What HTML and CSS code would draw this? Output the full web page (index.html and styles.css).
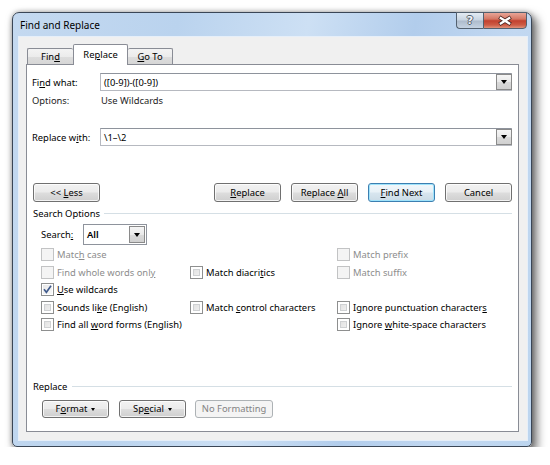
FILE: index.html
```html
<!DOCTYPE html>
<html>
<head>
<meta charset="utf-8">
<title>Find and Replace</title>
<link rel="stylesheet" href="styles.css">
</head>
<body>
<div class="window">
  <div class="titlebar">
    <span class="title">Find and Replace</span>
    <div class="caption-btns">
      <div class="cbtn help"><span>?</span></div>
      <div class="cbtn close">
        <svg width="44" height="17" viewBox="0 0 44 17">
          <path d="M16 5 L28 12.5 M28 5 L16 12.5" stroke="#4a2520" stroke-width="4.2" fill="none"/>
          <path d="M16.6 5.4 L27.4 12.1 M27.4 5.4 L16.6 12.1" stroke="#ffffff" stroke-width="2.4" fill="none"/>
        </svg>
      </div>
    </div>
  </div>
  <div class="client">
    <div class="tabs">
      <div class="tab t-find">Fin<u>d</u></div>
      <div class="tab sel t-rep">Re<u>p</u>lace</div>
      <div class="tab t-go"><u>G</u>o To</div>
    </div>
    <div class="panel">
      <div class="field-row first">
        <span class="flabel">Fi<u>n</u>d what:</span>
        <div class="combo"><span class="ctext">([0-9])-([0-9])</span><div class="drop"><i class="tri"></i></div></div>
      </div>
      <div class="opt-row">
        <span class="flabel">Options:</span>
        <span class="otext">Use Wildcards</span>
      </div>
      <div class="field-row second">
        <span class="flabel">Replace w<u>i</u>th:</span>
        <div class="combo"><span class="ctext">\1–\2</span><div class="drop"><i class="tri"></i></div></div>
      </div>
      <div class="btn-row main">
        <button class="btn"><span>&lt;&lt; <u>L</u>ess</span></button>
        <button class="btn push"><span><u>R</u>eplace</span></button>
        <button class="btn"><span>Replace <u>A</u>ll</span></button>
        <button class="btn default"><span><u>F</u>ind Next</span></button>
        <button class="btn"><span>Cancel</span></button>
      </div>
      <div class="group-head">
        <span>Search Options</span><div class="rule"></div>
      </div>
      <div class="search-row">
        <span class="slabel">Search<u>:</u></span>
        <div class="select"><span class="stext">All</span><div class="drop"><i class="tri"></i></div></div>
      </div>
      <div class="checks">
        <div class="chk disabled"><i class="box"></i><span>Matc<u>h</u> case</span></div>
        <div class="chk empty"></div>
        <div class="chk disabled"><i class="box"></i><span>Match prefix</span></div>

        <div class="chk disabled"><i class="box"></i><span>Find whole words onl<u>y</u></span></div>
        <div class="chk"><i class="box"></i><span>Match diacri<u>t</u>ics</span></div>
        <div class="chk disabled"><i class="box"></i><span>Match suffix</span></div>

        <div class="chk"><i class="box checked"><svg width="11" height="11" viewBox="0 0 11 11"><path d="M2 5.2 L4.4 8.3 L9 1.8" stroke="#3f5a8c" stroke-width="1.6" fill="none"/></svg></i><span><u>U</u>se wildcards</span></div>
        <div class="chk empty"></div>
        <div class="chk empty"></div>

        <div class="chk"><i class="box"></i><span>Sounds li<u>k</u>e (English)</span></div>
        <div class="chk"><i class="box"></i><span>Match <u>c</u>ontrol characters</span></div>
        <div class="chk"><i class="box"></i><span>Ignore punctuation character<u>s</u></span></div>

        <div class="chk"><i class="box"></i><span>Find all <u>w</u>ord forms (English)</span></div>
        <div class="chk empty"></div>
        <div class="chk"><i class="box"></i><span>Ignore <u>w</u>hite-space characters</span></div>
      </div>
      <div class="group-head rep">
        <span>Replace</span><div class="rule"></div>
      </div>
      <div class="btn-row bottom">
        <button class="btn"><span>F<u>o</u>rmat</span><i class="mini-tri"></i></button>
        <button class="btn"><span>Sp<u>e</u>cial</span><i class="mini-tri"></i></button>
        <button class="btn wide" disabled><span>No Formatting</span></button>
      </div>
    </div>
  </div>
</div>
</body>
</html>
```

FILE: styles.css
```css
* { box-sizing: border-box; }
html, body { margin: 0; }
body {
  background: #ffffff;
  padding: 12px 0 0 12px;
  font-family: "Noto Sans", "Open Sans", sans-serif;
  font-size: 9.4px;
  color: #000;
}
u { text-decoration: underline; text-underline-offset: 1px; }

.window {
  width: 520px;
  height: 435px;
  border: 1px solid #3a4656;
  border-radius: 7px 7px 5px 5px;
  background:
    linear-gradient(100deg, #c4d9f0 0%, #bad3ee 28%, #cde0f4 50%, #b2cdec 68%, #c2d8f1 85%, #bcd5ef 100%);
  box-shadow: 4px 5px 10px 1px rgba(0, 0, 0, 0.55), 0 0 5px rgba(0, 0, 0, 0.3);
  padding: 0 4px 6px 6px;
  display: flex;
  flex-direction: column;
}

.titlebar {
  height: 24px;
  display: flex;
  align-items: flex-start;
}
.title {
  padding-left: 1px;
  line-height: 24px;
  font-size: 10px;
  color: #000;
}
.caption-btns {
  margin-left: auto;
  margin-top: -1px;
  display: flex;
}
.cbtn {
  height: 17px;
  border: 1px solid #52606f;
  display: flex;
  align-items: center;
  justify-content: center;
}
.help {
  width: 27px;
  border-right: none;
  border-radius: 0 0 0 4px;
  background: linear-gradient(#e3ebf3 0%, #c9d5e2 45%, #aebccd 55%, #c5d3e2 100%);
}
.help span {
  font-family: "DejaVu Sans", sans-serif;
  font-weight: bold;
  font-size: 11px;
  color: #f2f4f7;
  text-shadow: 1px 0 0 #55606c, -1px 0 0 #55606c, 0 1px 0 #55606c, 0 -1px 0 #55606c;
  line-height: 1;
  margin-top: -1px;
}
.close {
  width: 44px;
  border-radius: 0 0 4px 0;
  background: linear-gradient(#e8a597 0%, #d47764 40%, #c2412f 52%, #cd5b45 80%, #e0917a 100%);
}
.close svg { display: block; }

.client {
  flex: 1;
  background: #f0f0f0;
  box-shadow: 0 0 0 1px #e6eff9;
  padding: 7px 8px 8px 7px;
  display: flex;
  flex-direction: column;
}

.tabs {
  height: 21px;
  display: flex;
  align-items: flex-end;
  padding-left: 1px;
}
.tab {
  height: 17px;
  border: 1px solid #898c95;
  border-bottom: none;
  border-radius: 2px 2px 0 0;
  background: linear-gradient(#f3f3f3 0%, #ebebeb 50%, #dddddd 51%, #d5d5d5 100%);
  display: flex;
  align-items: center;
  justify-content: center;
  padding-bottom: 1px;
}
.t-find { width: 46px; border-right: none; }
.t-rep { width: 55px; }
.t-go { width: 45px; border-left: none; }
.tab.sel {
  height: 21px;
  background: #ffffff;
  position: relative;
  z-index: 2;
  padding-bottom: 2px;
}

.panel {
  position: relative;
  z-index: 1;
  margin-top: -1px;
  height: 368px;
  background: #ffffff;
  border: 1px solid #898c95;
  display: flex;
  flex-direction: column;
}

.field-row {
  display: flex;
  align-items: center;
  padding: 0 6px 0 5px;
  height: 18px;
}
.field-row.first { margin-top: 8px; }
.field-row.second { margin-top: 21px; }
.flabel { width: 68px; flex: none; }
.combo {
  flex: 1;
  height: 18px;
  border: 1px solid #b6b9c0;
  border-top-color: #8e939c;
  background: #fff;
  display: flex;
  align-items: center;
  padding-left: 3px;
}
.ctext { flex: 1; }
.drop {
  width: 16px;
  height: 16px;
  border: 1px solid #8a8a8a;
  background: linear-gradient(#f5f5f5 0%, #e9e9e9 50%, #dadada 51%, #d0d0d0 100%);
  display: flex;
  align-items: center;
  justify-content: center;
  margin-right: -1px;
}
.tri {
  width: 0;
  height: 0;
  border-left: 3.5px solid transparent;
  border-right: 3.5px solid transparent;
  border-top: 4px solid #000;
}

.opt-row {
  margin-top: 2px;
  height: 14px;
  display: flex;
  align-items: center;
  padding-left: 5px;
  color: #1e1e1e;
}
.otext { padding-left: 1px; }

.btn-row {
  display: flex;
  padding: 0 6px;
}
.btn-row.main { margin-top: 37px; gap: 10px; }
.btn {
  width: 67px;
  height: 19px;
  padding: 0;
  border: 1px solid #707070;
  border-radius: 3px;
  background: linear-gradient(#f2f2f2 0%, #ebebeb 48%, #dddddd 52%, #cfcfcf 100%);
  box-shadow: inset 0 0 0 1px rgba(255, 255, 255, 0.75);
  font: inherit;
  color: #000;
  display: flex;
  align-items: center;
  justify-content: center;
  gap: 4px;
}
.btn span { white-space: nowrap; }
.btn.push { margin-left: auto; }
.btn.default {
  border-color: #3c7fb1;
  box-shadow: inset 0 0 0 1px #9fe3fb;
  background: linear-gradient(#f1f7fb 0%, #e8f1f7 48%, #d8e6ef 52%, #cbdbe6 100%);
}

.group-head {
  margin-top: 4px;
  height: 14px;
  display: flex;
  align-items: center;
  padding: 0 6px;
}
.group-head .rule {
  flex: 1;
  height: 1px;
  background: #d5dfe5;
  margin-left: 4px;
}
.group-head.rep { margin-top: 46px; }
.group-head.rep .rule { margin-left: 5px; }

.search-row {
  margin-top: 4px;
  height: 21px;
  display: flex;
  align-items: center;
  padding-left: 14px;
}
.slabel { width: 42px; flex: none; }
.select {
  width: 64px;
  height: 21px;
  border: 1px solid #8e939c;
  background: #fff;
  display: flex;
  align-items: center;
  padding-left: 3px;
}
.stext { flex: 1; font-weight: 600; }
.select .drop { height: 17px; width: 16px; margin-right: 1px; }

.checks {
  margin-top: 1px;
  margin-left: 14px;
  display: grid;
  grid-template-columns: 149px 147px 1fr;
  grid-auto-rows: 17.5px;
}
.chk {
  display: flex;
  align-items: center;
  gap: 3px;
}
.box {
  width: 13px;
  height: 13px;
  flex: none;
  border: 1px solid #8e8f8f;
  background: #fff;
  box-shadow: inset 0 0 0 2px #fff, inset 0 0 0 3px #cfd1d3;
  background-image: linear-gradient(135deg, #dcdcdc 0%, #f6f6f6 100%);
  display: flex;
  align-items: center;
  justify-content: center;
}
.box.checked {
  background-image: linear-gradient(135deg, #e6e6e6 0%, #fafafa 100%);
  box-shadow: inset 0 0 0 1px #fff;
}
.box svg { display: block; }
.chk.disabled { color: #8d8d8d; }
.chk.disabled .box {
  border-color: #c2c3c4;
  background-image: none;
  background: #f4f4f4;
  box-shadow: none;
}

.btn-row.bottom {
  margin-top: 6px;
  padding-left: 15px;
}
.btn-row.bottom .btn { height: 18px; }
.btn-row.bottom .btn + .btn { margin-left: 10px; }
.btn-row.bottom .btn.wide { width: 78px; margin-left: 9px; }
.btn:disabled {
  border-color: #adb2b5;
  background: #f4f4f4;
  box-shadow: none;
  color: #838383;
}
.mini-tri {
  width: 0;
  height: 0;
  border-left: 2.5px solid transparent;
  border-right: 2.5px solid transparent;
  border-top: 3px solid #000;
  margin-top: 1px;
}
```
